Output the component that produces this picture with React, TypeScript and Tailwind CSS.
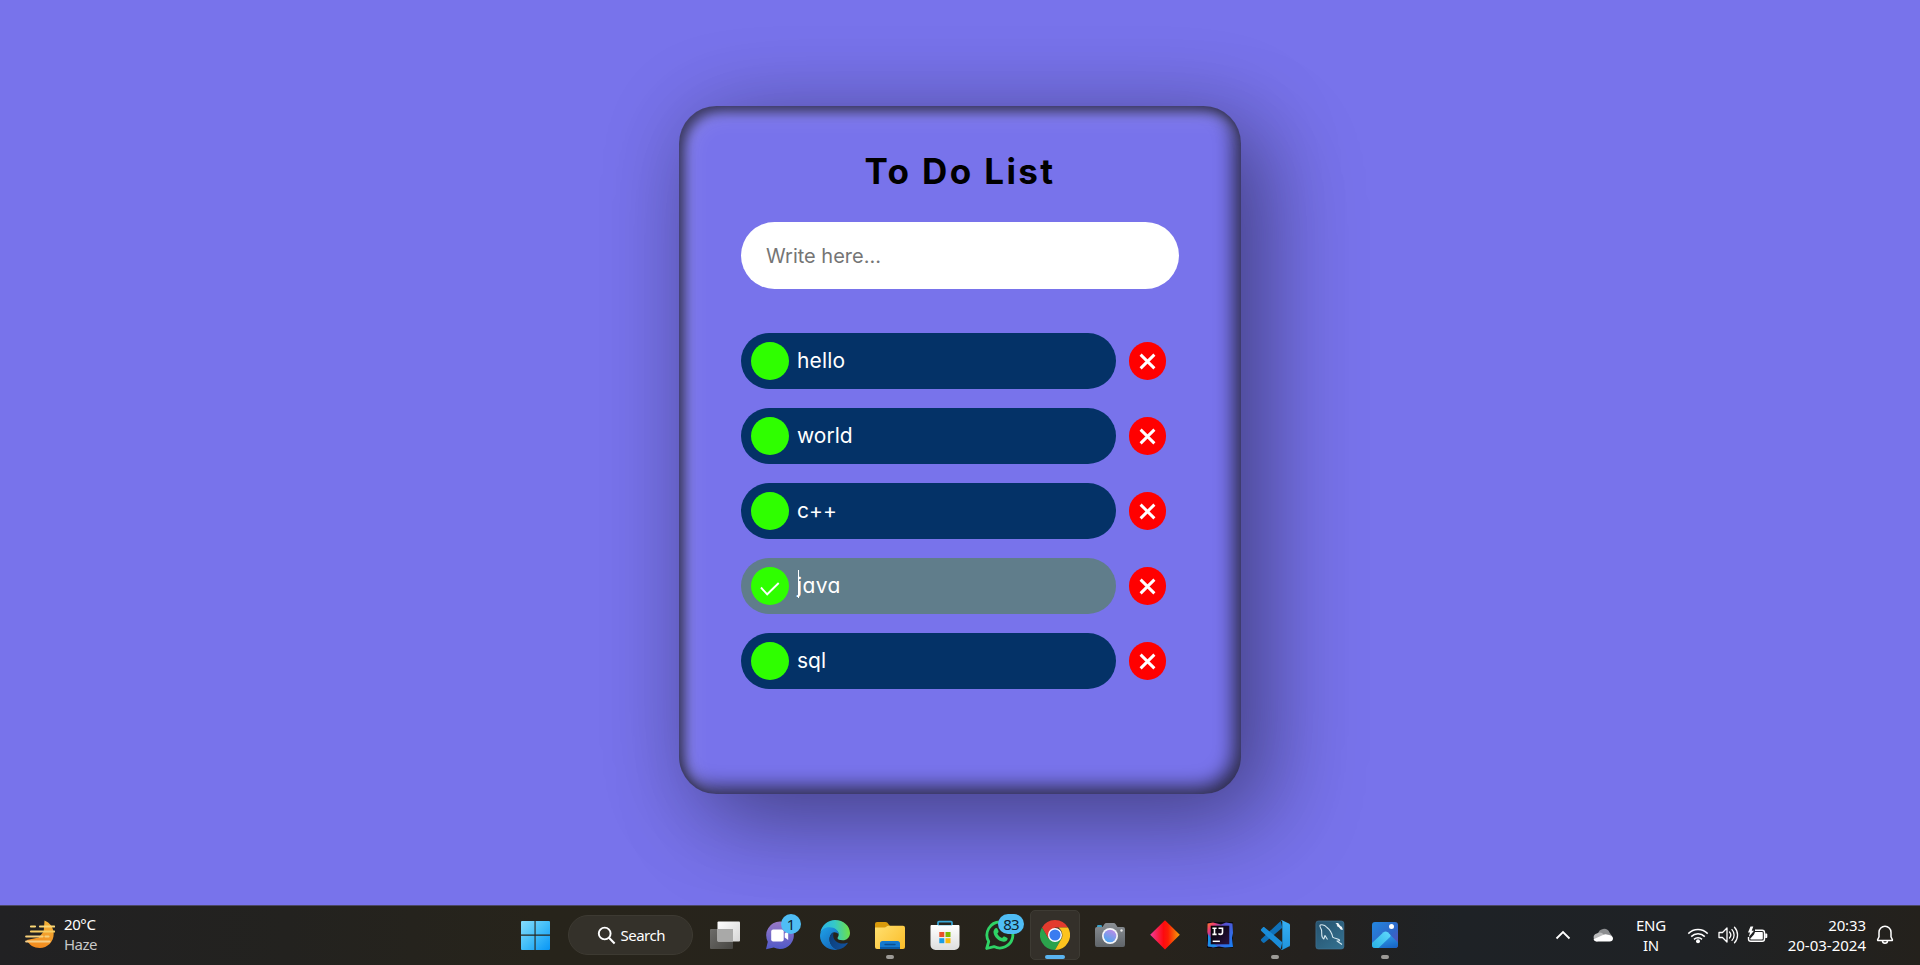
import type { ReactNode } from "react";

type Todo = { text: string; done?: boolean; tracking: string };

const todos: Todo[] = [
  { text: "hello", tracking: "tracking-[0.15px]" },
  { text: "world", tracking: "tracking-[0px]" },
  { text: "c++", tracking: "tracking-[0.1px]" },
  { text: "java", done: true, tracking: "tracking-[0.35px]" },
  { text: "sql", tracking: "tracking-[0px]" },
];

function TodoRow({ text, done, tracking }: Todo) {
  return (
    <li className="flex h-[56px] items-center">
      <div
        className={`flex h-[56px] w-[375px] items-center rounded-full pl-[10px] ${
          done ? "bg-[#607d8b]" : "bg-[#043267]"
        }`}
      >
        <span className="flex size-[38px] items-center justify-center rounded-full bg-[#2fff00]">
          {done && (
            <svg width="20" height="14" viewBox="0 0 20 14" fill="none" className="mt-[5px]">
              <path d="M1 5.5 7.2 12.3 18.7 1" stroke="#fff" strokeWidth="1.9" />
            </svg>
          )}
        </span>
        <span className={`relative ml-[8px] text-[21px] leading-[28px] text-white ${tracking}`}>
          {text}
          {done && <span className="absolute top-[-2px] left-[1px] h-[28px] w-px bg-white" />}
        </span>
      </div>
      <button className="ml-[13px] flex h-[38px] w-[37px] items-center justify-center rounded-full bg-[#ff0000]">
        <svg width="17" height="17" viewBox="0 0 17 17" fill="none">
          <path d="M1.600 1.600 15.400 15.400M15.400 1.600 1.600 15.400" stroke="#fff" strokeWidth="2.9" />
        </svg>
      </button>
    </li>
  );
}

function Icon({ children }: { children: ReactNode }) {
  return (
    <svg width="30" height="30" viewBox="0 0 30 30" fill="none">
      {children}
    </svg>
  );
}

function Cell({ children, mark, active }: { children: ReactNode; mark?: boolean; active?: boolean }) {
  return (
    <div className="relative flex h-[60px] w-[55px] items-center justify-center">
      {active && (
        <span className="absolute top-[5px] right-[3px] bottom-[5px] left-[2px] rounded-[5px] border border-[#3e3b34] bg-[#34302a]" />
      )}
      <span className="relative flex">{children}</span>
      {mark && <span className="absolute top-[50px] h-[4px] w-[8px] rounded-full bg-[#9c9a96]" />}
      {active && <span className="absolute top-[50px] h-[4px] w-[20px] rounded-full bg-[#5ab4f0]" />}
    </div>
  );
}

function StartIcon() {
  return (
    <Icon>
      <defs>
        <linearGradient id="win" x1="1" y1="1" x2="29" y2="29" gradientUnits="userSpaceOnUse">
          <stop stopColor="#86dcfb" />
          <stop offset=".5" stopColor="#45bff8" />
          <stop offset="1" stopColor="#0c98f5" />
        </linearGradient>
      </defs>
      <path
        d="M1 2a1 1 0 0 1 1-1h12.5v13.5H1zM15.6 1H29a1 1 0 0 1 1 1v12.5H15.6zM1 15.7h13.5V30H2a1 1 0 0 1-1-1zM15.6 15.7H30V29a1 1 0 0 1-1 1H15.6z"
        fill="url(#win)"
      />
    </Icon>
  );
}

function TaskViewIcon() {
  return (
    <Icon>
      <defs>
        <linearGradient id="tv" x1="8" y1="1" x2="30" y2="21" gradientUnits="userSpaceOnUse">
          <stop stopColor="#fff" />
          <stop offset="1" stopColor="#d6d6d6" />
        </linearGradient>
        <linearGradient id="tv2" x1="0" y1="9" x2="22" y2="29" gradientUnits="userSpaceOnUse">
          <stop stopColor="#6d6c69" />
          <stop offset="1" stopColor="#474642" />
        </linearGradient>
      </defs>
      <rect y="9" width="23" height="20" rx="1" fill="url(#tv2)" />
      <rect x="7.5" y="1.5" width="22.5" height="20" rx="1" fill="url(#tv)" />
      <rect x="7.5" y="9" width="15.5" height="12.5" fill="#a9a9a8" />
    </Icon>
  );
}

function ChatIcon() {
  return (
    <Icon>
      <defs>
        <linearGradient id="chat" x1="15" y1="1" x2="15" y2="29" gradientUnits="userSpaceOnUse">
          <stop stopColor="#9b7ac6" />
          <stop offset="1" stopColor="#5059c9" />
        </linearGradient>
      </defs>
      <path d="M15 1.5a13.8 13.8 0 1 1-6.2 26.1L1 29.2l1.8-7.4A13.8 13.8 0 0 1 15 1.5z" fill="url(#chat)" />
      <rect x="6.2" y="9.5" width="12.5" height="12" rx="2" fill="#fff" />
      <path d="m19.7 13.5 3.5-2.6v9.2l-3.5-2.6z" fill="#fff" />
    </Icon>
  );
}

function EdgeIcon() {
  return (
    <Icon>
      <defs>
        <linearGradient id="e1" x1="1" y1="12" x2="29" y2="10" gradientUnits="userSpaceOnUse">
          <stop stopColor="#2bb3ea" />
          <stop offset=".5" stopColor="#35c8c8" />
          <stop offset="1" stopColor="#6be04c" />
        </linearGradient>
        <linearGradient id="e2" x1="2" y1="12" x2="16" y2="28" gradientUnits="userSpaceOnUse">
          <stop stopColor="#1d97e0" />
          <stop offset="1" stopColor="#1466b8" />
        </linearGradient>
        <linearGradient id="e3" x1="10" y1="18" x2="28" y2="26" gradientUnits="userSpaceOnUse">
          <stop stopColor="#0c3f7c" />
          <stop offset="1" stopColor="#1253a0" />
        </linearGradient>
      </defs>
      <path
        d="M.4 12.5C1.7 5 8 0 15 0c8.6 0 15 6 15 13 0 4.5-3.3 7.3-7.3 7.3-3 0-5.2-1-5.2-2.3 0-.8 1.2-1.5 1.2-3.5 0-3.5-3.7-6.5-8.5-6.5C5.5 8 2 10 .4 12.5z"
        fill="url(#e1)"
      />
      <path
        d="M.2 14C.8 9.7 4.8 7.2 9.5 7.2c5.5 0 9.2 3.3 9.2 7.3-1-1.5-2.6-2.3-4.2-2.3-3 0-5 3.5-5 7 0 5 3.7 9 8.5 10.4C8.5 31.5 0 24.5 0 16z"
        fill="url(#e2)"
      />
      <path
        d="M13.5 12.3C10.6 14 9.4 17 9.5 19.4c.1 5.2 4 9.3 8.7 10.2 3.8-.5 7.4-2.9 9.5-6.3.3-.5-.2-.8-.6-.6-1.3.6-2.8.9-4.3.9-5.4 0-9.6-3.6-9.6-7.8 0-1.5.1-2.5.3-3.5z"
        fill="url(#e3)"
      />
    </Icon>
  );
}

function FolderIcon() {
  return (
    <Icon>
      <defs>
        <linearGradient id="fo" x1="2" y1="5" x2="28" y2="28" gradientUnits="userSpaceOnUse">
          <stop stopColor="#ffdf6e" />
          <stop offset="1" stopColor="#fbbf2c" />
        </linearGradient>
      </defs>
      <path d="M0 4a2 2 0 0 1 2-2h8.5c.8 0 1.4.3 1.9.8L15 6v6H0z" fill="#d99a0b" />
      <path d="M0 11V7.5h9.5c.8 0 1.3-.2 1.8-.7l.6-.5c.5-.3.9-.5 1.6-.5H28a2 2 0 0 1 2 2V27a2 2 0 0 1-2 2H2a2 2 0 0 1-2-2z" fill="url(#fo)" />
      <path d="M5 29v-5.5a2.5 2.5 0 0 1 2.5-2.5h15a2.5 2.5 0 0 1 2.5 2.5V29z" fill="#1479cf" />
      <path d="M5 27h20v2H5z" fill="#0b5aa6" />
      <path d="M10 24.5h10" stroke="#0c4f90" strokeWidth="1.3" strokeLinecap="round" />
    </Icon>
  );
}

function StoreIcon() {
  return (
    <Icon>
      <defs>
        <linearGradient id="st" x1="15" y1="5" x2="15" y2="30" gradientUnits="userSpaceOnUse">
          <stop stopColor="#fff" />
          <stop offset="1" stopColor="#dedede" />
        </linearGradient>
      </defs>
      <path d="M8 6V2.600C8 2 8.400 1.700 9 1.700h12c.6 0 1 .3 1 .9V6" stroke="#39a8d8" strokeWidth="1.7" />
      <path d="M.5 6.200c0-.7.5-1.200 1.200-1.200h26.600c.7 0 1.200.5 1.200 1.200V25a5 5 0 0 1-5 5h-19a5 5 0 0 1-5-5z" fill="url(#st)" />
      <path d="M8 5.500h14" stroke="#b9dfee" strokeWidth="1" />
      <path d="M9.300 12h5v5h-5z" fill="#e9502a" />
      <path d="M15.500 12h5v5h-5z" fill="#7fb900" />
      <path d="M9.300 18.200h5v5h-5z" fill="#1a9de6" />
      <path d="M15.500 18.200h5v5h-5z" fill="#fab90a" />
    </Icon>
  );
}

function WhatsAppIcon() {
  return (
    <Icon>
      <path
        d="M15.200 2A13 13 0 1 1 9 26.600L1.700 28.500l2-7A13 13 0 0 1 15.200 2z"
        stroke="#2fd366"
        strokeWidth="2.8"
        strokeLinejoin="round"
      />
      <path
        d="M10.500 8.200c.6-.5 1.500-.4 1.800.3l1.200 2.600c.2.500.1.900-.2 1.300l-1 1.200c.9 2 2.600 3.600 4.800 4.500l1.200-1.300c.4-.4.8-.5 1.300-.3l2.400 1.200c.6.300.8.800.6 1.400-.5 1.900-2.300 3-4.100 2.700-5.300-.8-9.300-4.700-10-9.300-.2-1.700.6-3.300 2-4.300z"
        fill="#2fd366"
      />
    </Icon>
  );
}

function ChromeIcon() {
  return (
    <Icon>
      <path d="M15 0A15 15 0 0 1 28 7.500H15L8.500 18.700 2 7.500A15 15 0 0 1 15 0z" fill="#e33b2e" />
      <path d="M2 7.500A15 15 0 0 0 15 30l6.500-11.200H8.500z" fill="#2ba24c" />
      <path d="M28 7.500A15 15 0 0 1 15 30l6.500-11.200c1.800-3.500.8-8.300-3-11.300z" fill="#fcc31e" />
      <circle cx="15" cy="15" r="7" fill="#fff" />
      <circle cx="15" cy="15" r="5.6" fill="#3a7cf0" />
    </Icon>
  );
}

function CameraIcon() {
  return (
    <Icon>
      <defs>
        <linearGradient id="ca" x1="15" y1="3" x2="15" y2="28" gradientUnits="userSpaceOnUse">
          <stop stopColor="#8a8f94" />
          <stop offset="1" stopColor="#5e6368" />
        </linearGradient>
        <linearGradient id="cb" x1="18" y1="10" x2="12" y2="22" gradientUnits="userSpaceOnUse">
          <stop stopColor="#b98be8" />
          <stop offset="1" stopColor="#4aa6ee" />
        </linearGradient>
      </defs>
      <path d="M2 7.500V6.300C2 5.500 2.700 5 3.500 5h2C6.300 5 7 5.500 7 6.300v1.200z" fill="#3aa0c8" />
      <path d="M0 9a2 2 0 0 1 2-2h5.500L9.300 4.200A2.500 2.500 0 0 1 11.400 3h7.200c.9 0 1.600.4 2.100 1.200L22.500 7H28a2 2 0 0 1 2 2v16a2 2 0 0 1-2 2H2a2 2 0 0 1-2-2z" fill="url(#ca)" />
      <circle cx="15" cy="16" r="8" fill="#f5f5f8" />
      <circle cx="15" cy="16" r="6.3" fill="url(#cb)" />
      <circle cx="26.5" cy="10.5" r="1.2" fill="#e8e8e8" />
    </Icon>
  );
}

function DiamondIcon() {
  return (
    <Icon>
      <defs>
        <linearGradient id="di" x1="0" y1="15" x2="30" y2="15" gradientUnits="userSpaceOnUse">
          <stop stopColor="#f03c9c" />
          <stop offset=".45" stopColor="#fd0a10" />
          <stop offset=".6" stopColor="#fb1c05" />
          <stop offset="1" stopColor="#f7a20a" />
        </linearGradient>
      </defs>
      <path d="m15 .2 14.800 14.600L15 29.500.2 14.800z" fill="url(#di)" />
    </Icon>
  );
}

function IntelliJIcon() {
  return (
    <Icon>
      <defs>
        <linearGradient id="ij" x1="2" y1="2" x2="28" y2="24" gradientUnits="userSpaceOnUse">
          <stop stopColor="#fd8224" />
          <stop offset=".2" stopColor="#ee3c72" />
          <stop offset=".42" stopColor="#5a4fd0" />
          <stop offset="1" stopColor="#1b7df2" />
        </linearGradient>
        <linearGradient id="ik" x1="6" y1="6" x2="24" y2="24" gradientUnits="userSpaceOnUse">
          <stop stopColor="#000" />
          <stop offset="1" stopColor="#2a1240" />
        </linearGradient>
      </defs>
      <path d="M2 2h26v26H2z" fill="#0b0b12" />
      <path d="M2.500 3.500 8 2.500l8 2 5-2 6.500 1L28 13l-1 5 1 9-8 .5-6-1-6 1L2.500 26l.8-9-1-5z" fill="url(#ij)" />
      <path d="M3 14v12.500l9 .5z" fill="#1a8fe8" />
      <path d="M5.700 5.700h18.600v18.600H5.700z" fill="url(#ik)" />
      <path d="M7.400 8.200h4.200M9.500 8.200v6.200M7.400 14.400h4.200M13.500 8.200h4V12.300c0 1.400-.8 2.100-2 2.100-.8 0-1.500-.3-2-.9" stroke="#fff" strokeWidth="1.6" />
      <path d="M7.700 21.300h7.200" stroke="#fff" strokeWidth="1.5" />
    </Icon>
  );
}

function CodeIcon() {
  return (
    <Icon>
      <defs>
        <linearGradient id="vs" x1="26" y1="0" x2="26" y2="30" gradientUnits="userSpaceOnUse">
          <stop stopColor="#36b0f5" />
          <stop offset="1" stopColor="#1f93dc" />
        </linearGradient>
      </defs>
      <path d="M22.300 7.800 4.700 22.600c-.6.400-1.400.4-1.900-.1l-1.500-1.400c-.6-.6-.6-1.500 0-2L20.700.9z" fill="#0f70b8" />
      <path d="M22.300 22.200 4.700 7.400c-.6-.4-1.400-.4-1.900.1L1.300 9c-.6.500-.6 1.400 0 1.900l19.400 18.200z" fill="#1a8cd8" />
      <path d="m22 .2 6.900 3.200c.7.300 1.100 1 1.100 1.700v19.800c0 .7-.4 1.400-1.100 1.700L22 29.900c-.7 0-1.200-.3-1.600-.8.700.5 1.900.1 1.900-.9V1.800c0-1-1.200-1.400-1.900-.9.400-.5 1-.8 1.600-.7z" fill="url(#vs)" />
    </Icon>
  );
}

function WorkbenchIcon() {
  return (
    <Icon>
      <defs>
        <linearGradient id="my" x1="2" y1="1" x2="26" y2="29" gradientUnits="userSpaceOnUse">
          <stop stopColor="#27536f" />
          <stop offset="1" stopColor="#33708f" />
        </linearGradient>
      </defs>
      <rect x=".9" y="1" width="28" height="28" rx="2.5" fill="url(#my)" stroke="#47799a" strokeWidth=".6" />
      <path
        d="M5 5c3-.8 5.500.5 7 2.500 3 2.300 5 6 5.700 9.700 1.800 1.500 5.200 1.300 6.800 2.800.5 1-1.500 1.300-2.500 1l5 3.500M5 5c-.6 2 1 3.500 1.500 5 .5 2-.3 4.500.8 7.300.4.900.9 1.300 1.500 1.700L10 15.500l2.500 4"
        stroke="#d6e8f0"
        strokeWidth="1.1"
        strokeLinejoin="round"
      />
      <path d="m22.500 4.500 4 4" stroke="#f2f6f8" strokeWidth="2.2" />
      <path d="M20.500 3.500c1-.9 3-.7 3.600.7s-.4 2.700-1.600 2.700l.3-1.600zM28 9.500c-1 .8-2.500.2-3-1s.5-2 1.500-2z" fill="#f2f6f8" />
    </Icon>
  );
}

function PhotosIcon() {
  return (
    <Icon>
      <defs>
        <linearGradient id="ph" x1="4" y1="4" x2="27" y2="26" gradientUnits="userSpaceOnUse">
          <stop stopColor="#2483dd" />
          <stop offset=".6" stopColor="#2f67c8" />
          <stop offset="1" stopColor="#5a4fb8" />
        </linearGradient>
        <linearGradient id="pi" x1="18" y1="12" x2="4" y2="27" gradientUnits="userSpaceOnUse">
          <stop stopColor="#5cd5fb" />
          <stop offset="1" stopColor="#2cb4e6" />
        </linearGradient>
        <linearGradient id="pj" x1="20" y1="14" x2="24" y2="28" gradientUnits="userSpaceOnUse">
          <stop stopColor="#2f9be8" />
          <stop offset="1" stopColor="#1763c4" />
        </linearGradient>
        <clipPath id="pc">
          <rect x="2" y="2" width="26" height="26" rx="3" />
        </clipPath>
      </defs>
      <g clipPath="url(#pc)">
        <path d="M2 2h26v26H2z" fill="url(#ph)" />
        <path d="m17.500 12.200 10.500 10.300V30H7z" fill="url(#pj)" />
        <path d="M1 24 13.500 12.300c1.200-1.100 3-1.100 4.200 0l2.300 2.200c.8.800.8 1.600 0 2.400L8 28.500H1z" fill="url(#pi)" />
      </g>
      <circle cx="21.500" cy="6.500" r="2.500" fill="#fff" />
    </Icon>
  );
}

function HazeIcon() {
  return (
    <svg width="30" height="30" viewBox="0 0 30 30" fill="none">
      <defs>
        <linearGradient id="hz" x1="20" y1="0" x2="15" y2="28" gradientUnits="userSpaceOnUse">
          <stop stopColor="#f2b33a" />
          <stop offset="1" stopColor="#f28a1e" />
        </linearGradient>
      </defs>
      <path d="M19.500.5c5.300 2 9.200 7.200 9.200 13.300C28.700 22 22.500 28 14.800 28 9 28 4 25 1.700 20l12-2.500 5-6z" fill="url(#hz)" />
      <path d="M6 6.500h4M15 6.500h14.200" stroke="#fbd876" strokeWidth="2.2" strokeLinecap="round" />
      <path d="M6 11.500h23.200" stroke="#f8cd62" strokeWidth="2.2" strokeLinecap="round" />
      <path d="M1.200 16.500h16.300M20.500 16.500h3" stroke="#f6cf7a" strokeWidth="2.2" strokeLinecap="round" />
      <path d="M1.200 21.500h23.300" stroke="#f6cd85" strokeWidth="2.2" strokeLinecap="round" />
    </svg>
  );
}

function Taskbar() {
  return (
    <footer className="grid h-[60px] grid-cols-[507.5px_905px_1fr] border-t border-[#4b4866] bg-[linear-gradient(to_right,#212123_0%,#23221f_15%,#27241b_28%,#27231c_60%,#24211e_68%,#1e2226_76%,#1f2225_88%,#24211c_100%)] font-['Noto_Sans',sans-serif] text-[15px] text-white">
      <div className="flex items-start pl-[25px]">
        <span className="mt-[14px]">
          <HazeIcon />
        </span>
        <div className="mt-[8px] ml-[9px] leading-[20px]">
          <p className="tracking-[-0.4px]">20°C</p>
          <p className="tracking-[-0.5px] text-[#c8c8c8]">Haze</p>
        </div>
      </div>

      <nav className="-mt-px flex">
        <Cell>
          <StartIcon />
        </Cell>
        <div className="flex w-[135px] items-center justify-center">
          <div className="flex h-[40px] w-[125px] items-center rounded-full border border-[#3d3a32] bg-[#34312a] pl-[28px]">
            <svg width="19" height="19" viewBox="0 0 19 19" fill="none">
              <circle cx="7.7" cy="7.5" r="5.9" stroke="#fff" strokeWidth="1.9" />
              <path d="m12 11.800 5.600 5.700" stroke="#fff" strokeWidth="2.1" />
            </svg>
            <span className="ml-[5px] text-[15px] tracking-[-0.5px]">Search</span>
          </div>
        </div>
        <Cell>
          <TaskViewIcon />
        </Cell>
        <Cell>
          <ChatIcon />
          <span className="absolute top-[-6px] left-[16px] flex size-[20px] items-center justify-center rounded-full bg-[#4fbdf5] text-[15px] leading-none text-[#10222e]">
            1
          </span>
        </Cell>
        <Cell>
          <EdgeIcon />
        </Cell>
        <Cell mark>
          <FolderIcon />
        </Cell>
        <Cell>
          <StoreIcon />
        </Cell>
        <Cell>
          <WhatsAppIcon />
          <span className="absolute top-[-6px] left-[13px] flex h-[20px] w-[26px] items-center justify-center rounded-full bg-[#4fbdf5] text-[15px] leading-none tracking-[-0.9px] text-[#10222e]">
            83
          </span>
        </Cell>
        <Cell active>
          <ChromeIcon />
        </Cell>
        <Cell>
          <CameraIcon />
        </Cell>
        <Cell>
          <DiamondIcon />
        </Cell>
        <Cell>
          <IntelliJIcon />
        </Cell>
        <Cell mark>
          <CodeIcon />
        </Cell>
        <Cell>
          <WorkbenchIcon />
        </Cell>
        <Cell mark>
          <PhotosIcon />
        </Cell>
      </nav>

      <div className="-mt-px flex items-center justify-end pr-[26px]">
        <svg width="16" height="10" viewBox="0 0 16 10" fill="none">
          <path d="m1.500 8.500 6.500-6.500 6.500 6.500" stroke="#fff" strokeWidth="1.8" />
        </svg>
        <svg width="20" height="14" viewBox="0 0 20 14" className="ml-[22px]">
          <path d="M5 6.500A6 6 0 0 1 16.500 4.500L19 8 12 9z" fill="#8b8d8f" />
          <path d="M4.300 13.500A4 4 0 0 1 3.800 5.600 5.500 5.500 0 0 1 11 7z" fill="#b9babb" />
          <path d="M3.600 13.500c-1.500-.2-2.600-1-3-2.300L10 7a6 6 0 0 1 5-.2c3 .3 5 1.600 5 3.700 0 1.700-1.300 3-3.300 3z" fill="#fff" />
        </svg>
        <div className="ml-[22px] w-[32px] text-center leading-[20px] tracking-[-0.2px]">
          <p>ENG</p>
          <p>IN</p>
        </div>
        <svg width="22" height="17" viewBox="0 0 22 17" fill="none" className="ml-[20px]">
          <path d="M1.300 6.600a13.700 13.700 0 0 1 19.400 0M4.200 9.600a9.600 9.600 0 0 1 13.600 0M7 12.400a5.700 5.700 0 0 1 8 0" stroke="#fff" strokeWidth="1.5" />
          <circle cx="11" cy="14.3" r="2" fill="#fff" />
        </svg>
        <svg width="21" height="18" viewBox="0 0 21 18" fill="none" className="ml-[9px]">
          <path d="M1 6.500h3.500L9 2v14l-4.500-4.500H1z" stroke="#fff" strokeWidth="1.3" strokeLinejoin="round" />
          <path d="M11.500 6a4.500 4.500 0 0 1 0 6M14 3.600a8 8 0 0 1 0 10.800M16.500 1.200a11.500 11.500 0 0 1 0 15.600" stroke="#fff" strokeWidth="1.3" strokeLinecap="round" />
        </svg>
        <svg width="21" height="18" viewBox="0 0 21 18" fill="none" className="ml-[8px]">
          <path d="M8 4.200h7.200a2.300 2.300 0 0 1 2.300 2.300V13a2.300 2.300 0 0 1-2.300 2.300H3.800A2.300 2.300 0 0 1 1.500 13v-2" stroke="#fff" strokeWidth="1.4" />
          <path d="M8 6h7c.5 0 .8.300.8.800v6c0 .4-.3.800-.8.800H4c-.4 0-.8-.4-.8-.8L7 8.500z" fill="#fff" />
          <path d="M18.200 7.600h1c.6 0 1.100.4 1.100 1v2.300c0 .6-.5 1-1.100 1h-1z" fill="#fff" />
          <path d="M3.500.5 1 6.500h2L1.800 11 7 4.700H4.700L6.300.5z" fill="#fff" />
        </svg>
        <div className="ml-[17px] w-[81px] text-right leading-[20px]">
          <p className="tracking-[-0.1px]">20:33</p>
          <p className="whitespace-nowrap">20-03-2024</p>
        </div>
        <svg width="18" height="20" viewBox="0 0 18 20" fill="none" className="ml-[10px]">
          <path d="M9 1.200a6 6 0 0 1 6 6v4.600l1.400 3c.1.400-.1.700-.5.700H2.100c-.4 0-.6-.3-.5-.7l1.400-3V7.200a6 6 0 0 1 6-6z" stroke="#fff" strokeWidth="1.5" />
          <path d="M6.500 15.800a2.500 2.500 0 0 0 5 0" stroke="#fff" strokeWidth="1.5" />
        </svg>
      </div>
    </footer>
  );
}

export default function App() {
  return (
    <div className="flex h-[965px] w-[1920px] flex-col overflow-hidden bg-[#7873eb]">
      <main className="flex h-[905px] justify-center overflow-hidden pt-[106px] font-[Inter,sans-serif] [font-feature-settings:'cv11']">
        <section className="h-[688px] w-[562px] rounded-[37.5px] px-[62px] pt-[39px] shadow-[31px_31px_94px_rgba(0,0,0,0.25),12px_12px_88px_rgba(0,0,0,0.25),inset_6px_6px_12px_rgba(0,0,0,0.5),inset_6px_6px_25px_rgba(255,255,255,0.2),inset_-6px_-6px_19px_rgba(0,0,0,0.75)]">
          <h1 className="text-center text-[35px] leading-[52px] font-bold tracking-[2.4px] text-black">
            To Do List
          </h1>
          <input
            className="mt-[25px] block h-[67px] w-[438px] rounded-full bg-white px-[25px] text-[20px] text-black outline-none placeholder:text-[#757575] placeholder:opacity-100"
            placeholder="Write here..."
          />
          <ul className="mt-[44px] flex flex-col gap-[19px]">
            {todos.map((t) => (
              <TodoRow key={t.text} {...t} />
            ))}
          </ul>
        </section>
      </main>
      <Taskbar />
    </div>
  );
}
